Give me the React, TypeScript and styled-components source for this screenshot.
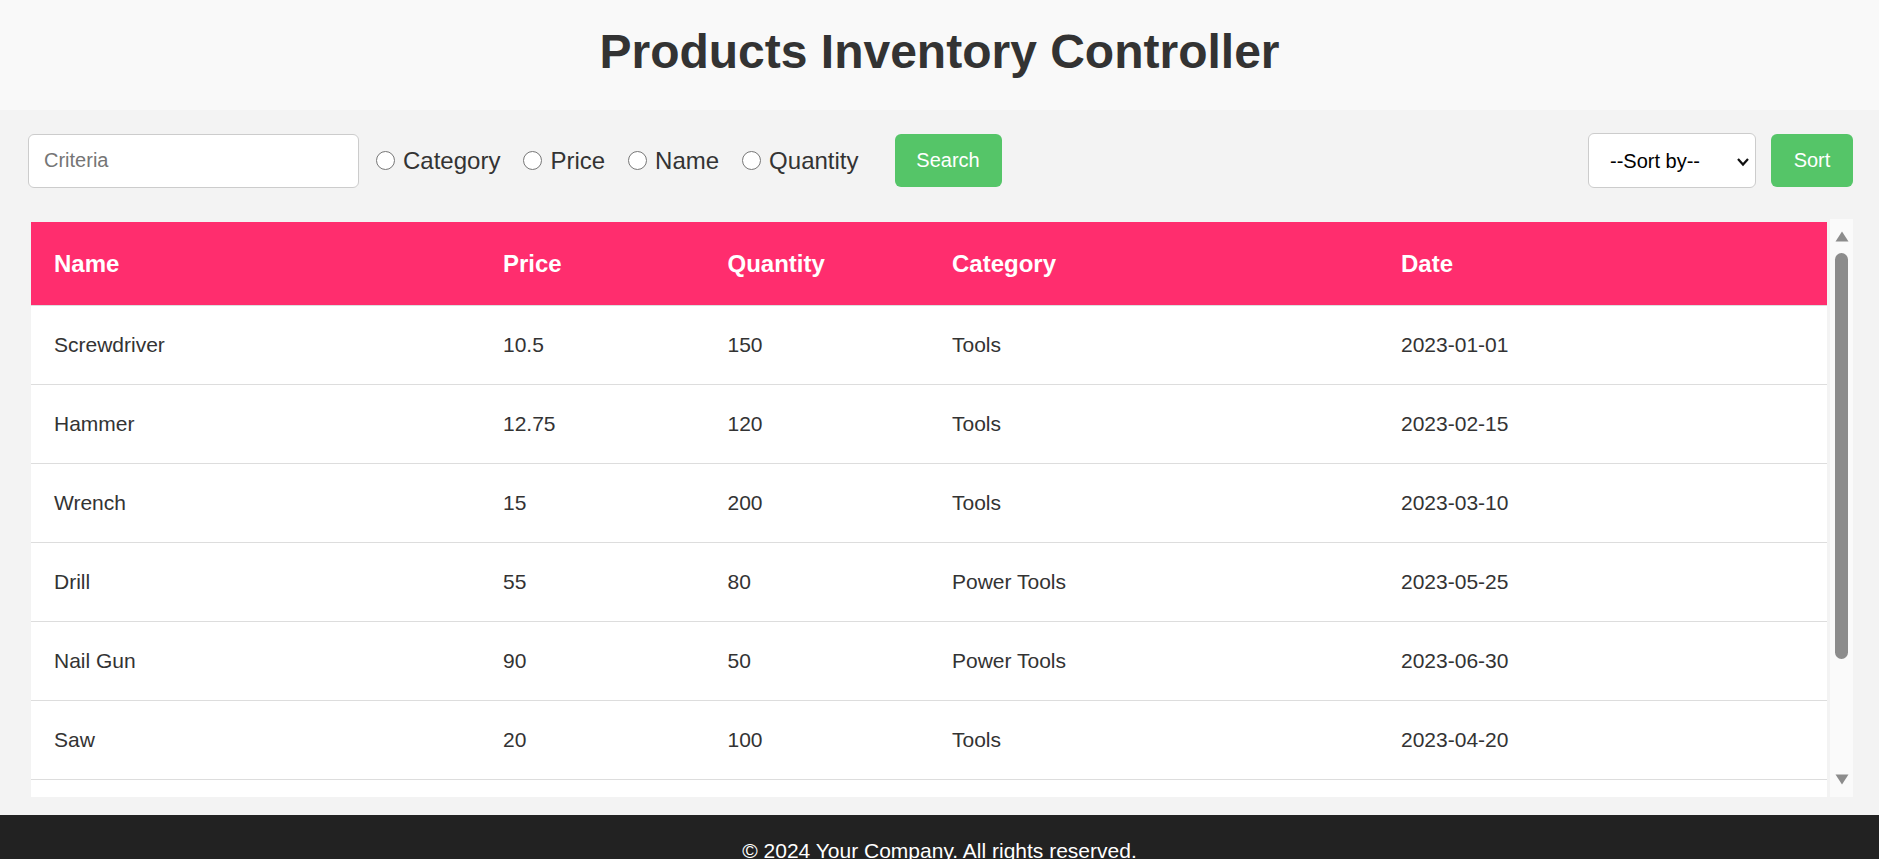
import * as React from 'react';
import styled, { createGlobalStyle } from 'styled-components';

interface Product {
  name: string;
  price: number;
  quantity: number;
  category: string;
  date: string;
}

const products: Product[] = [
  { name: 'Screwdriver', price: 10.5, quantity: 150, category: 'Tools', date: '2023-01-01' },
  { name: 'Hammer', price: 12.75, quantity: 120, category: 'Tools', date: '2023-02-15' },
  { name: 'Wrench', price: 15, quantity: 200, category: 'Tools', date: '2023-03-10' },
  { name: 'Drill', price: 55, quantity: 80, category: 'Power Tools', date: '2023-05-25' },
  { name: 'Nail Gun', price: 90, quantity: 50, category: 'Power Tools', date: '2023-06-30' },
  { name: 'Saw', price: 20, quantity: 100, category: 'Tools', date: '2023-04-20' },
  { name: 'Pliers', price: 8.25, quantity: 175, category: 'Tools', date: '2023-07-12' },
  { name: 'Sander', price: 45, quantity: 60, category: 'Power Tools', date: '2023-08-05' },
];

const criteriaOptions = ['Category', 'Price', 'Name', 'Quantity'];

const GlobalStyle = createGlobalStyle`
  html, body {
    margin: 0;
    padding: 0;
    font-family: "Liberation Sans", Arial, sans-serif;
    background: #f3f3f3;
    color: #333;
  }
  * {
    box-sizing: border-box;
  }
`;

const Page = styled.div`
  display: flex;
  flex-direction: column;
  min-height: 100vh;
`;

const Header = styled.header`
  height: 110px;
  padding-top: 24px;
  background: #f9f9f9;
  text-align: center;
`;

const Title = styled.h1`
  margin: 0;
  font-size: 48px;
  font-weight: bold;
  color: #333;
`;

const Main = styled.main`
  padding: 23px 26px 18px 28px;
  background: #f3f3f3;
`;

const Toolbar = styled.div`
  display: flex;
  align-items: center;
  height: 55px;
  margin-bottom: 31px;
`;

const CriteriaInput = styled.input`
  width: 331px;
  height: 54px;
  padding: 0 15px;
  border: 1px solid #ccc;
  border-radius: 6px;
  background: #fff;
  font-family: inherit;
  font-size: 20px;
  color: #333;
  outline: none;

  &::placeholder {
    color: #757575;
  }
`;

const RadioGroup = styled.div`
  display: flex;
  align-items: center;
  gap: 23px;
  margin-left: 17px;
`;

const RadioLabel = styled.label`
  display: flex;
  align-items: center;
  gap: 8px;
  font-size: 24px;
  color: #333;
  cursor: pointer;
`;

const Radio = styled.input`
  appearance: none;
  width: 19px;
  height: 19px;
  margin: 0;
  border: 1.5px solid #777;
  border-radius: 50%;
  background: #fff;
  cursor: pointer;

  &:checked {
    background: radial-gradient(circle, #0075ff 45%, #fff 48%);
    border-color: #0075ff;
  }
`;

const GreenButton = styled.button<{ $width: number }>`
  width: ${(p) => p.$width}px;
  height: 53px;
  border: none;
  border-radius: 6px;
  background: #55c568;
  color: #fff;
  font-family: inherit;
  font-size: 20px;
  cursor: pointer;
`;

const SearchButton = styled(GreenButton)`
  margin-left: 36px;
`;

const SortArea = styled.div`
  display: flex;
  align-items: center;
  gap: 15px;
  margin-left: auto;
`;

const SelectWrap = styled.div`
  position: relative;
  width: 168px;
  height: 55px;
`;

const SortSelect = styled.select`
  appearance: none;
  width: 100%;
  height: 100%;
  padding: 0 30px 0 21px;
  border: 1px solid #ccc;
  border-radius: 6px;
  background: #fff;
  font-family: inherit;
  font-size: 20px;
  color: #000;
  outline: none;
`;

const Chevron = styled.svg`
  position: absolute;
  right: 6px;
  top: 50%;
  width: 14px;
  height: 14px;
  margin-top: -6px;
  pointer-events: none;
`;

const TableBox = styled.div`
  display: flex;
  height: 578px;
`;

const TableViewport = styled.div`
  flex: 1;
  min-width: 0;
  padding: 3px 3px 0 3px;
  overflow-y: auto;
  scrollbar-width: none;
`;

const ScrollRail = styled.div`
  display: flex;
  flex-direction: column;
  align-items: center;
  width: 23px;
  padding: 12px 0;
  background: #fafafa;
`;

const RailArrow = styled.svg`
  display: block;
  width: 14px;
  height: 11px;
  flex-shrink: 0;
`;

const RailThumb = styled.div<{ $height: number }>`
  width: 13px;
  height: ${(p) => p.$height}px;
  margin-top: 11px;
  border-radius: 7px;
  background: #8c8c8c;
`;

const RailSpacer = styled.div`
  flex: 1;
`;

const Table = styled.table`
  width: 100%;
  border-collapse: collapse;
  background: #fff;
  table-layout: fixed;
`;

const HeadCell = styled.th<{ $width: string }>`
  width: ${(p) => p.$width};
  padding: 27px 23px;
  border-bottom: 1px solid #ddd;
  background: #ff2d6e;
  color: #fff;
  font-size: 24px;
  line-height: 29px;
  font-weight: bold;
  text-align: left;
`;

const Cell = styled.td`
  padding: 27px 23px;
  border-bottom: 1px solid #ddd;
  font-size: 21px;
  line-height: 24px;
  color: #333;
`;

const Footer = styled.footer`
  flex: 1;
  padding: 24px 0;
  background: #222;
  color: #fff;
  font-size: 21px;
  line-height: 24px;
  text-align: center;
`;

const columns = [
  { label: 'Name', width: '25%' },
  { label: 'Price', width: '12.5%' },
  { label: 'Quantity', width: '12.5%' },
  { label: 'Category', width: '25%' },
  { label: 'Date', width: '25%' },
];

export default function App() {
  const [criteria, setCriteria] = React.useState('');
  const [field, setField] = React.useState('');
  const [sortBy, setSortBy] = React.useState('');

  return (
    <Page>
      <GlobalStyle />
      <Header>
        <Title>Products Inventory Controller</Title>
      </Header>
      <Main>
        <Toolbar>
          <CriteriaInput
            placeholder="Criteria"
            value={criteria}
            onChange={(e) => setCriteria(e.target.value)}
          />
          <RadioGroup>
            {criteriaOptions.map((option) => (
              <RadioLabel key={option}>
                <Radio
                  type="radio"
                  name="criteria"
                  checked={field === option}
                  onChange={() => setField(option)}
                />
                {option}
              </RadioLabel>
            ))}
          </RadioGroup>
          <SearchButton $width={107}>Search</SearchButton>
          <SortArea>
            <SelectWrap>
              <SortSelect value={sortBy} onChange={(e) => setSortBy(e.target.value)}>
                <option value="">--Sort by--</option>
                <option value="name">Name</option>
                <option value="price">Price</option>
                <option value="quantity">Quantity</option>
                <option value="date">Date</option>
              </SortSelect>
              <Chevron viewBox="0 0 14 14">
                <polyline points="2,4 7,9.5 12,4" fill="none" stroke="#111" strokeWidth="2.2" />
              </Chevron>
            </SelectWrap>
            <GreenButton $width={82}>Sort</GreenButton>
          </SortArea>
        </Toolbar>
        <TableBox>
          <TableViewport>
            <Table>
              <thead>
                <tr>
                  {columns.map((col) => (
                    <HeadCell key={col.label} $width={col.width}>
                      {col.label}
                    </HeadCell>
                  ))}
                </tr>
              </thead>
              <tbody>
                {products.map((p) => (
                  <tr key={p.name}>
                    <Cell>{p.name}</Cell>
                    <Cell>{p.price}</Cell>
                    <Cell>{p.quantity}</Cell>
                    <Cell>{p.category}</Cell>
                    <Cell>{p.date}</Cell>
                  </tr>
                ))}
              </tbody>
            </Table>
          </TableViewport>
          <ScrollRail>
            <RailArrow viewBox="0 0 14 11">
              <path d="M7 0.5 L13.5 10.5 H0.5 Z" fill="#8c8c8c" />
            </RailArrow>
            <RailThumb $height={406} />
            <RailSpacer />
            <RailArrow viewBox="0 0 14 11">
              <path d="M0.5 0.5 H13.5 L7 10.5 Z" fill="#8c8c8c" />
            </RailArrow>
          </ScrollRail>
        </TableBox>
      </Main>
      <Footer>© 2024 Your Company. All rights reserved.</Footer>
    </Page>
  );
}
